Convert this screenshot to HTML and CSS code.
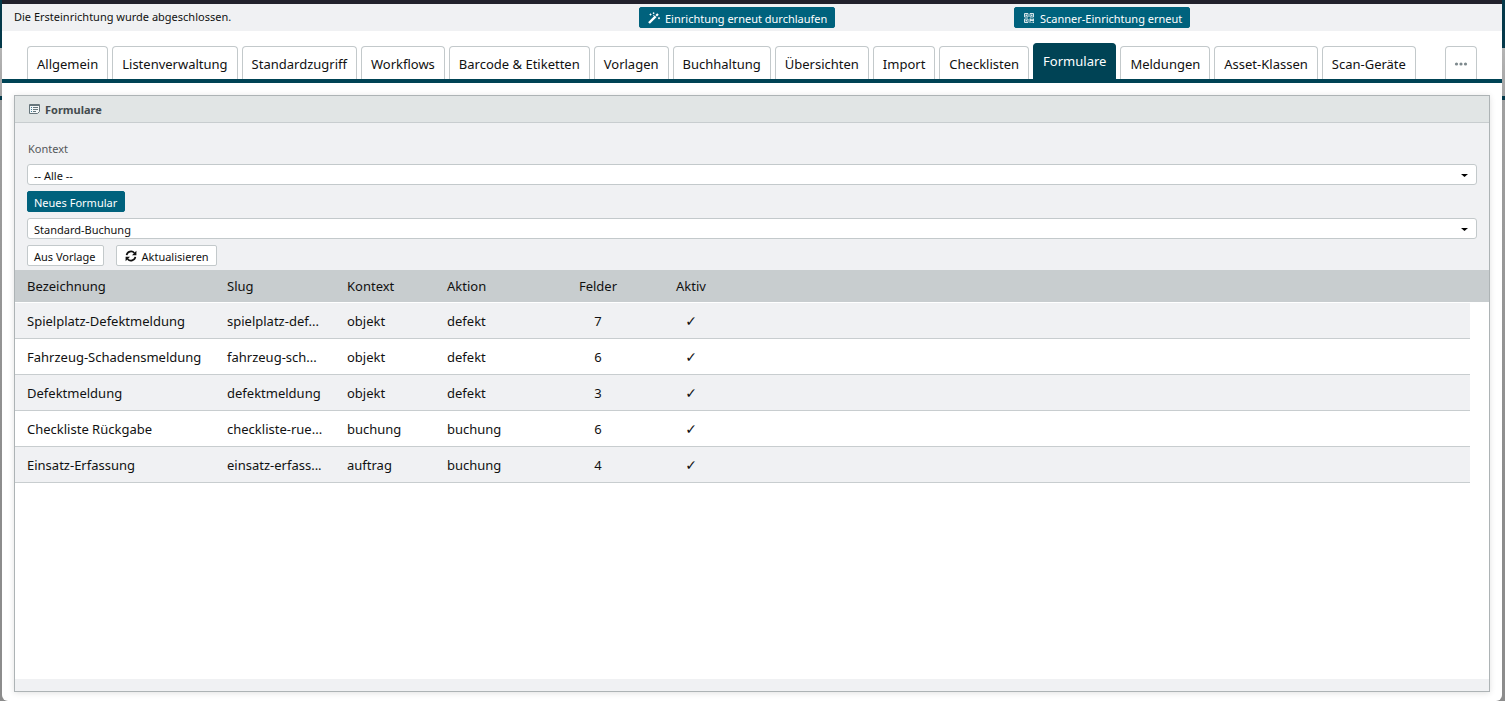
FILE: index.html
```html
<!DOCTYPE html>
<html lang="de">
<head>
    <meta charset="UTF-8">
    <meta name="viewport" content="width=device-width, initial-scale=1.0">
    <title>Formulare</title>
    <link rel="stylesheet" href="styles.css">
</head>
<body>
<div class="dialog">
    <div class="setup-bar">
        <span class="setup-text">Die Ersteinrichtung wurde abgeschlossen.</span>
        <div class="setup-cell">
            <button type="button" class="btn btn-primary">
                <svg class="icon" viewBox="0 0 12 12" aria-hidden="true">
                    <path d="M1 11 7.6 4.4" stroke="currentColor" stroke-width="2.4" fill="none"/>
                    <path d="M8.2 3.8 10 2" stroke="currentColor" stroke-width="2.2" fill="none"/>
                    <path d="M1.5 2.5h2M2.5 1.5v2M4.8 1.2h1.6M5.6.4v1.6M10 6.2h2M11 5.2v2M5.2 3.4h1" stroke="currentColor" stroke-width=".9" fill="none"/>
                </svg>
                Einrichtung erneut durchlaufen
            </button>
        </div>
        <div class="setup-cell">
            <button type="button" class="btn btn-primary">
                <svg class="icon icon-qr" viewBox="0 0 12 12" aria-hidden="true">
                    <path d="M1.5 1.5h3.5v3.5H1.5zM7 1.5h3.5v3.5H7zM1.5 7h3.5v3.5H1.5z" stroke="currentColor" stroke-width="1" fill="none"/>
                    <path d="M2.5 2.5h1.5v1.5H2.5zM8 2.5h1.5v1.5H8zM2.5 8h1.5v1.5H2.5zM6.5 6.5h2v1h1v-1H11v3H9.5V9H7.5v2h-1zM8.5 10h1v1h-1zM10 10h1v1h-1z" fill="currentColor"/>
                </svg>
                Scanner-Einrichtung erneut
            </button>
        </div>
    </div>

    <div class="tabs">
        <button type="button" class="tab">Allgemein</button>
        <button type="button" class="tab">Listenverwaltung</button>
        <button type="button" class="tab">Standardzugriff</button>
        <button type="button" class="tab">Workflows</button>
        <button type="button" class="tab">Barcode &amp; Etiketten</button>
        <button type="button" class="tab">Vorlagen</button>
        <button type="button" class="tab">Buchhaltung</button>
        <button type="button" class="tab">Übersichten</button>
        <button type="button" class="tab">Import</button>
        <button type="button" class="tab">Checklisten</button>
        <button type="button" class="tab active">Formulare</button>
        <button type="button" class="tab">Meldungen</button>
        <button type="button" class="tab">Asset-Klassen</button>
        <button type="button" class="tab">Scan-Geräte</button>
        <button type="button" class="tab tab-more" aria-label="Weitere">
            <svg class="dots" viewBox="0 0 14 4" aria-hidden="true">
                <circle cx="2.5" cy="2" r="1.6"/><circle cx="7" cy="2" r="1.6"/><circle cx="11.5" cy="2" r="1.6"/>
            </svg>
        </button>
    </div>

    <div class="panel">
        <div class="panel-header">
            <svg class="icon" viewBox="0 0 12 12" aria-hidden="true">
                <path d="M.5 1.5h10v7l-2 2h-8z" fill="#f4f7f8" stroke="#66757b"/>
                <path d="M.5 2.5h10" stroke="#66757b"/>
                <path d="M2 4.5h1M2 6.5h1M2 8.5h1" stroke="#3f7f9a"/>
                <path d="M4 4.5h5M4 6.5h5M4 8.5h3" stroke="#66757b"/>
            </svg>
            <span>Formulare</span>
        </div>

        <div class="toolbar">
            <label for="kontext">Kontext</label>
            <select id="kontext" class="select">
                <option>-- Alle --</option>
            </select>
            <div class="actions">
                <button type="button" class="btn btn-primary">Neues Formular</button>
            </div>
            <select id="vorlage" class="select" aria-label="Vorlage">
                <option>Standard-Buchung</option>
            </select>
            <div class="actions">
                <button type="button" class="btn">Aus Vorlage</button>
                <button type="button" class="btn">
                    <svg class="icon" viewBox="0 0 12 12" aria-hidden="true">
                        <path d="M1.6 5.2A4.5 4.5 0 0 1 9.4 3M10.4 6.8A4.5 4.5 0 0 1 2.6 9" stroke="currentColor" stroke-width="1.7" fill="none"/>
                        <path d="M11.4.8v4.4H7zM.6 11.2V6.8H5z" fill="currentColor"/>
                    </svg>
                    Aktualisieren
                </button>
            </div>
        </div>

        <div class="grid">
            <table>
                <colgroup>
                    <col class="col-name">
                    <col class="col-slug">
                    <col class="col-context">
                    <col class="col-action">
                    <col class="col-fields">
                    <col class="col-active">
                    <col>
                    <col class="col-scroll">
                </colgroup>
                <thead>
                <tr>
                    <th>Bezeichnung</th>
                    <th>Slug</th>
                    <th>Kontext</th>
                    <th>Aktion</th>
                    <th class="center">Felder</th>
                    <th class="center">Aktiv</th>
                    <th></th>
                    <th></th>
                </tr>
                </thead>
                <tbody>
                <tr>
                    <td>Spielplatz-Defektmeldung</td>
                    <td>spielplatz-def...</td>
                    <td>objekt</td>
                    <td>defekt</td>
                    <td class="center">7</td>
                    <td class="center check">✓</td>
                    <td></td>
                    <td></td>
                </tr>
                <tr>
                    <td>Fahrzeug-Schadensmeldung</td>
                    <td>fahrzeug-sch...</td>
                    <td>objekt</td>
                    <td>defekt</td>
                    <td class="center">6</td>
                    <td class="center check">✓</td>
                    <td></td>
                    <td></td>
                </tr>
                <tr>
                    <td>Defektmeldung</td>
                    <td>defektmeldung</td>
                    <td>objekt</td>
                    <td>defekt</td>
                    <td class="center">3</td>
                    <td class="center check">✓</td>
                    <td></td>
                    <td></td>
                </tr>
                <tr>
                    <td>Checkliste Rückgabe</td>
                    <td>checkliste-rue...</td>
                    <td>buchung</td>
                    <td>buchung</td>
                    <td class="center">6</td>
                    <td class="center check">✓</td>
                    <td></td>
                    <td></td>
                </tr>
                <tr>
                    <td>Einsatz-Erfassung</td>
                    <td>einsatz-erfass...</td>
                    <td>auftrag</td>
                    <td>buchung</td>
                    <td class="center">4</td>
                    <td class="center check">✓</td>
                    <td></td>
                    <td></td>
                </tr>
                </tbody>
            </table>
        </div>
        <div class="panel-footer"></div>
    </div>
</div>
</body>
</html>
```
FILE: styles.css
```css
* {
    box-sizing: border-box;
}

body {
    margin: 0;
    min-height: 100vh;
    padding: 0 3px 0 2px;
    display: flex;
    font-family: "Noto Sans", "Open Sans", sans-serif;
    font-size: 13px;
    color: #111;
    background: linear-gradient(#04394a 48px, #b4b4b4 48px, #a4a4a4 96px, #04394a 96px, #04394a 100px, #a0a0a0 100px, #8c8c8c 500px);
}

button,
select {
    font-family: inherit;
    color: inherit;
}

.dialog {
    flex: 1;
    min-width: 0;
    display: flex;
    flex-direction: column;
    background: #fff;
    border-top: 4px solid #22212c;
    border-radius: 0 0 6px 6px;
}

.setup-bar {
    display: grid;
    grid-template-columns: 5fr 3fr 4fr;
    height: 27px;
    background: #f0f1f3;
    font-size: 11px;
}

.setup-text {
    padding-left: 12px;
    line-height: 26px;
}

.setup-cell {
    padding: 3px 0 0 12px;
}

.btn {
    display: inline-flex;
    align-items: center;
    gap: 5px;
    height: 21px;
    padding: 1px 7px 0 6px;
    border: 1px solid #c3c9cb;
    border-radius: 2px;
    background: #fff;
    font-size: 11px;
    white-space: nowrap;
    cursor: pointer;
}

.btn-primary {
    border-color: #00627d;
    background: #00627d;
    color: #fff;
}

.icon {
    width: 12px;
    height: 12px;
    margin-left: 2px;
}

.icon-qr {
    opacity: 0.85;
}

.tabs {
    display: flex;
    align-items: flex-end;
    gap: 4px;
    height: 52px;
    padding: 0 25px;
    border-bottom: 4px solid #004355;
}

.tab {
    height: 33px;
    padding: 2px 9px 0;
    border: 1px solid #c3c9cb;
    border-bottom: none;
    border-radius: 4px 4px 0 0;
    background: #fff;
    font-size: 13px;
    white-space: nowrap;
    cursor: pointer;
}

.tab.active {
    height: 36px;
    padding-top: 0;
    padding-bottom: 1px;
    border-color: #004355;
    background: #004355;
    color: #fff;
}

.tab-more {
    width: 32px;
    margin-left: auto;
}

.dots {
    display: block;
    width: 14px;
    height: 4px;
    margin-left: -1px;
    fill: #7d898d;
}

.panel {
    flex: 1;
    display: flex;
    flex-direction: column;
    margin: 12px 12px 9px;
    border: 1px solid #adb3b5;
    background: #f0f1f3;
    box-shadow: 0 1px 6px rgba(0, 0, 0, 0.12);
}

.panel-header {
    display: flex;
    align-items: center;
    gap: 4px;
    height: 27px;
    padding: 0 12px;
    border-bottom: 1px solid #c8cdcf;
    background: #e1e5e5;
    color: #444b4e;
    font-size: 11px;
    font-weight: bold;
}

.toolbar {
    display: flex;
    flex-direction: column;
    gap: 6px;
    padding: 17px 12px 4px;
}

.toolbar label {
    padding-left: 1px;
    color: #55585a;
    font-size: 11px;
    line-height: 18px;
}

.select {
    width: 100%;
    height: 21px;
    padding: 1px 6px 0;
    border: 1px solid #c3c9cb;
    border-radius: 3px;
    font-size: 11px;
    appearance: none;
    background: #fff url("data:image/svg+xml,%3Csvg xmlns='http://www.w3.org/2000/svg' width='7' height='5'%3E%3Cpath d='M0 2h7L3.5 5z'/%3E%3C/svg%3E") no-repeat right 8px center;
}

.actions {
    display: flex;
    gap: 12px;
}

.grid {
    flex: 1;
    background: #fff;
}

table {
    width: 100%;
    table-layout: fixed;
    border-collapse: separate;
    border-spacing: 0;
}

.col-name {
    width: 200px;
}

.col-slug,
.col-action {
    width: 120px;
}

.col-context,
.col-active {
    width: 100px;
}

.col-fields {
    width: 86px;
}

.col-scroll {
    width: 19px;
}

th,
td {
    padding: 0 0 0 12px;
    text-align: left;
    white-space: nowrap;
}

th {
    height: 33px;
    border-bottom: 1px solid #fff;
    background: #c8cdcf;
    font-weight: normal;
}

td {
    height: 36px;
    border-bottom: 1px solid #c8cdcf;
}

tbody tr:nth-child(odd) td {
    background: #f0f1f3;
}

tbody tr td:last-child {
    border-bottom-color: #fff;
    background: #fff;
}

th.center,
td.center {
    padding: 0;
    text-align: center;
}

.check {
    font-family: "DejaVu Sans", sans-serif;
    font-size: 14px;
}

.panel-footer {
    height: 12px;
}
```
